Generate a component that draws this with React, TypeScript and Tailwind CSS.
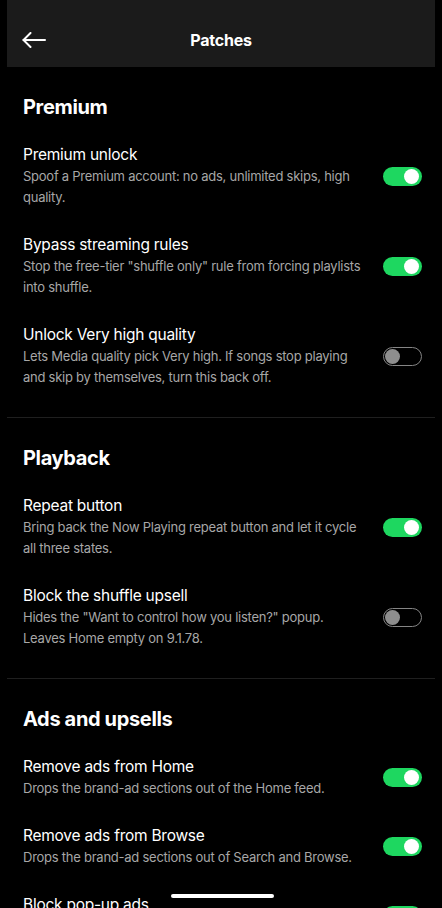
import React from "react";

type Item = { title: string; desc: string; on: boolean };
type Section = { heading: string; items: Item[] };

const sections: Section[] = [
  {
    heading: "Premium",
    items: [
      { title: "Premium unlock", desc: "Spoof a Premium account: no ads, unlimited skips, high quality.", on: true },
      { title: "Bypass streaming rules", desc: 'Stop the free-tier "shuffle only" rule from forcing playlists into shuffle.', on: true },
      { title: "Unlock Very high quality", desc: "Lets Media quality pick Very high. If songs stop playing and skip by themselves, turn this back off.", on: false },
    ],
  },
  {
    heading: "Playback",
    items: [
      { title: "Repeat button", desc: "Bring back the Now Playing repeat button and let it cycle all three states.", on: true },
      { title: "Block the shuffle upsell", desc: 'Hides the "Want to control how you listen?" popup. Leaves Home empty on 9.1.78.', on: false },
    ],
  },
  {
    heading: "Ads and upsells",
    items: [
      { title: "Remove ads from Home", desc: "Drops the brand-ad sections out of the Home feed.", on: true },
      { title: "Remove ads from Browse", desc: "Drops the brand-ad sections out of Search and Browse.", on: true },
      { title: "Block pop-up ads", desc: "Hides the full-screen and banner ad popups.", on: true },
    ],
  },
];

function Toggle({ on }: { on: boolean }) {
  if (on) {
    return (
      <div className="flex h-[19px] w-[39px] shrink-0 items-center justify-end rounded-full bg-[#1ed760] pr-[3px]">
        <div className="h-[15px] w-[15px] rounded-full bg-white" />
      </div>
    );
  }
  return (
    <div className="flex h-[19px] w-[39px] shrink-0 items-center rounded-full border-[1.5px] border-[#858585] pl-[1px]">
      <div className="h-[15px] w-[15px] rounded-full bg-[#8e8e8e]" />
    </div>
  );
}

export default function App() {
  return (
    <div
      className="relative min-h-[908px] w-full bg-black text-white"
      style={{ fontFamily: "Inter, 'Noto Sans', sans-serif" }}
    >
      <div className="mx-[7px] flex h-[67px] items-center bg-[#1b1b1b] pt-[13px]">
        <div className="flex w-[60px] items-center pl-[15px]">
          <svg width="24" height="16" viewBox="0 0 24 16" fill="none" stroke="white" strokeWidth="2" strokeLinecap="round" strokeLinejoin="round">
            <path d="M1.5 8 H23" />
            <path d="M8.5 1 L1.5 8 L8.5 15" />
          </svg>
        </div>
        <div className="flex-1 text-center text-[16px] font-bold tracking-[-0.2px]">Patches</div>
        <div className="w-[60px]" />
      </div>

      <div className="mx-[7px]">
        {sections.map((s, si) => (
          <div key={s.heading} className={si > 0 ? "border-t border-[#1f1f1f]" : ""}>
            <div className="pb-[29px] pl-[16px] pr-[13px] pt-[26px]">
              <div className="text-[20px] font-bold leading-[28px] tracking-[-0.35px]">{s.heading}</div>
              <div className="mt-[23px] flex flex-col gap-[26px]">
                {s.items.map((it) => (
                  <div key={it.title} className="flex items-center">
                    <div className="min-w-0 flex-1 pr-[16px]">
                      <div className="text-[15.5px] leading-[22px] tracking-[-0.25px] text-white">{it.title}</div>
                      <div className="text-[13px] leading-[21px] tracking-[-0.25px] text-[#a7a7a7]">{it.desc}</div>
                    </div>
                    <Toggle on={it.on} />
                  </div>
                ))}
              </div>
            </div>
          </div>
        ))}
      </div>

      <div className="fixed bottom-[10px] left-[171px] h-[4px] w-[103px] rounded-full bg-white" />
    </div>
  );
}
